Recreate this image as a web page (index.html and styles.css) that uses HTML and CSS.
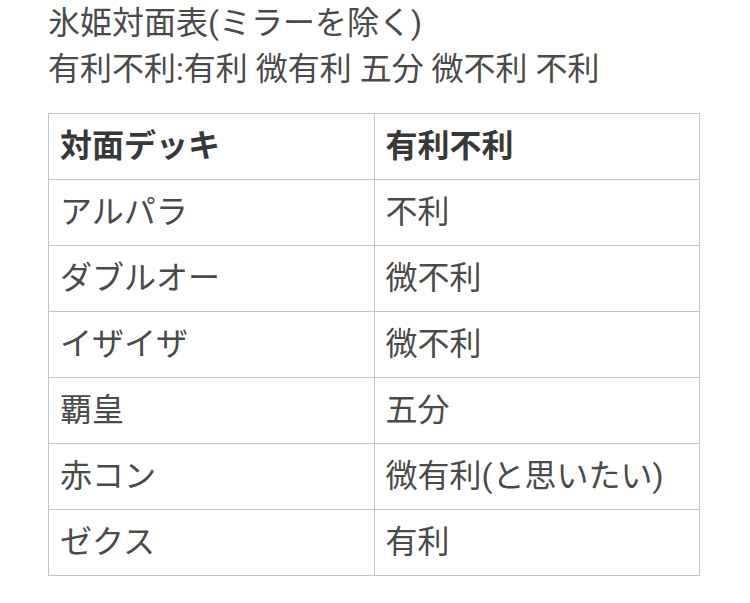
FILE: index.html
```html
<!DOCTYPE html>
<html lang="ja">
<head>
<meta charset="utf-8">
<link rel="stylesheet" href="styles.css">
</head>
<body>
<div class="page">
  <div class="intro">
    <p class="line">氷姫対面表(ミラーを除く)</p>
    <p class="line">有利不利:有利 微有利 五分 微不利 不利</p>
  </div>
  <table class="matchups">
    <thead>
      <tr><th>対面デッキ</th><th>有利不利</th></tr>
    </thead>
    <tbody>
      <tr><td>アルパラ</td><td>不利</td></tr>
      <tr><td>ダブルオー</td><td>微不利</td></tr>
      <tr><td>イザイザ</td><td>微不利</td></tr>
      <tr><td>覇皇</td><td>五分</td></tr>
      <tr><td>赤コン</td><td>微有利(と思いたい)</td></tr>
      <tr><td>ゼクス</td><td>有利</td></tr>
    </tbody>
  </table>
</div>
</body>
</html>
```

FILE: styles.css
```css
html, body {
  margin: 0;
  padding: 0;
  background: #ffffff;
}
body {
  font-family: "Roboto", "Noto Sans CJK JP", sans-serif;
  color: #4a4a4a;
  font-size: 32px;
}
.page {
  padding: 0 50px 0 48px;
}
.intro .line {
  margin: 0;
  line-height: 46px;
}
.matchups {
  margin-top: 21px;
  width: 100%;
  border-collapse: collapse;
  table-layout: fixed;
}
.matchups th,
.matchups td {
  border: 1px solid #c4c4c4;
  padding: 10px 11px;
  line-height: 45px;
  text-align: left;
  font-weight: normal;
}
.matchups th {
  font-weight: bold;
  color: #383838;
}
```
